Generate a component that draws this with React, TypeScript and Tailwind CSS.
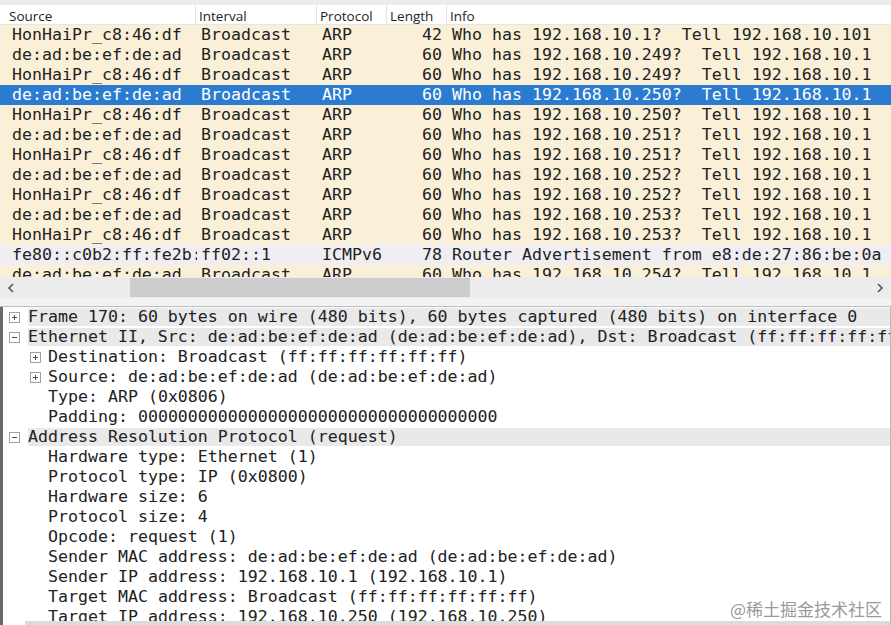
import React from "react";

type Row = { src: string; dst: string; proto: string; len: string; info: string; kind: "arp" | "icmp" | "sel" };

const rows: Row[] = [
  { src: "HonHaiPr_c8:46:df", dst: "Broadcast", proto: "ARP", len: "42", info: "Who has 192.168.10.1?  Tell 192.168.10.101", kind: "arp" },
  { src: "de:ad:be:ef:de:ad", dst: "Broadcast", proto: "ARP", len: "60", info: "Who has 192.168.10.249?  Tell 192.168.10.1", kind: "arp" },
  { src: "HonHaiPr_c8:46:df", dst: "Broadcast", proto: "ARP", len: "60", info: "Who has 192.168.10.249?  Tell 192.168.10.1", kind: "arp" },
  { src: "de:ad:be:ef:de:ad", dst: "Broadcast", proto: "ARP", len: "60", info: "Who has 192.168.10.250?  Tell 192.168.10.1", kind: "sel" },
  { src: "HonHaiPr_c8:46:df", dst: "Broadcast", proto: "ARP", len: "60", info: "Who has 192.168.10.250?  Tell 192.168.10.1", kind: "arp" },
  { src: "de:ad:be:ef:de:ad", dst: "Broadcast", proto: "ARP", len: "60", info: "Who has 192.168.10.251?  Tell 192.168.10.1", kind: "arp" },
  { src: "HonHaiPr_c8:46:df", dst: "Broadcast", proto: "ARP", len: "60", info: "Who has 192.168.10.251?  Tell 192.168.10.1", kind: "arp" },
  { src: "de:ad:be:ef:de:ad", dst: "Broadcast", proto: "ARP", len: "60", info: "Who has 192.168.10.252?  Tell 192.168.10.1", kind: "arp" },
  { src: "HonHaiPr_c8:46:df", dst: "Broadcast", proto: "ARP", len: "60", info: "Who has 192.168.10.252?  Tell 192.168.10.1", kind: "arp" },
  { src: "de:ad:be:ef:de:ad", dst: "Broadcast", proto: "ARP", len: "60", info: "Who has 192.168.10.253?  Tell 192.168.10.1", kind: "arp" },
  { src: "HonHaiPr_c8:46:df", dst: "Broadcast", proto: "ARP", len: "60", info: "Who has 192.168.10.253?  Tell 192.168.10.1", kind: "arp" },
  { src: "fe80::c0b2:ff:fe2b:", dst: "ff02::1", proto: "ICMPv6", len: "78", info: "Router Advertisement from e8:de:27:86:be:0a", kind: "icmp" },
  { src: "de:ad:be:ef:de:ad", dst: "Broadcast", proto: "ARP", len: "60", info: "Who has 192.168.10.254?  Tell 192.168.10.1", kind: "arp" },
];

type Node = { level: 0 | 1; icon?: "plus" | "minus"; text: string };

const tree: Node[] = [
  { level: 0, icon: "plus", text: "Frame 170: 60 bytes on wire (480 bits), 60 bytes captured (480 bits) on interface 0" },
  { level: 0, icon: "minus", text: "Ethernet II, Src: de:ad:be:ef:de:ad (de:ad:be:ef:de:ad), Dst: Broadcast (ff:ff:ff:ff:ff:ff)" },
  { level: 1, icon: "plus", text: "Destination: Broadcast (ff:ff:ff:ff:ff:ff)" },
  { level: 1, icon: "plus", text: "Source: de:ad:be:ef:de:ad (de:ad:be:ef:de:ad)" },
  { level: 1, text: "Type: ARP (0x0806)" },
  { level: 1, text: "Padding: 000000000000000000000000000000000000" },
  { level: 0, icon: "minus", text: "Address Resolution Protocol (request)" },
  { level: 1, text: "Hardware type: Ethernet (1)" },
  { level: 1, text: "Protocol type: IP (0x0800)" },
  { level: 1, text: "Hardware size: 6" },
  { level: 1, text: "Protocol size: 4" },
  { level: 1, text: "Opcode: request (1)" },
  { level: 1, text: "Sender MAC address: de:ad:be:ef:de:ad (de:ad:be:ef:de:ad)" },
  { level: 1, text: "Sender IP address: 192.168.10.1 (192.168.10.1)" },
  { level: 1, text: "Target MAC address: Broadcast (ff:ff:ff:ff:ff:ff)" },
  { level: 1, text: "Target IP address: 192.168.10.250 (192.168.10.250)" },
];

const mono = "font-['DejaVu_Sans_Mono','Liberation_Mono',monospace] text-[16.6px] leading-[20px] whitespace-pre";

function Expander({ type }: { type: "plus" | "minus" }) {
  return (
    <svg width="11" height="11" viewBox="0 0 11 11" className="shrink-0">
      <rect x="0.5" y="0.5" width="10" height="10" fill="#fff" stroke="#a0a0a0" />
      <line x1="3" y1="5.5" x2="8" y2="5.5" stroke="#505050" />
      {type === "plus" && <line x1="5.5" y1="3" x2="5.5" y2="8" stroke="#505050" />}
    </svg>
  );
}

export default function App() {
  return (
    <div className="relative w-[891px] h-[625px] overflow-hidden bg-white flex flex-col">
      {/* top strip */}
      <div className="h-[5px] bg-[#ececec] shrink-0" />
      {/* header */}
      <div className="h-[20px] shrink-0 flex items-center bg-white text-[13.5px] text-[#1e1e1e] font-['Open_Sans','Noto_Sans',sans-serif] border-b border-[#e6e6e6]">
        <div className="w-[196px] pl-[9px] pt-[3px] h-full flex items-center border-r border-[#e2e2e2]">Source</div>
        <div className="w-[121px] pl-[3px] pt-[3px] h-full flex items-center border-r border-[#e2e2e2]">Interval</div>
        <div className="w-[70px] pl-[3px] pt-[3px] h-full flex items-center border-r border-[#e2e2e2]">Protocol</div>
        <div className="w-[60px] pl-[3px] pt-[3px] h-full flex items-center border-r border-[#e2e2e2]">Length</div>
        <div className="pl-[3px] pt-[3px] h-full flex items-center">Info</div>
      </div>
      {/* packet list */}
      <div className="h-[252px] shrink-0 overflow-hidden">
        {rows.map((r, i) => (
          <div
            key={i}
            className={
              "flex h-[20px] items-center " +
              mono +
              " " +
              (r.kind === "sel"
                ? "bg-[#2b7bd0] text-white"
                : r.kind === "icmp"
                ? "bg-[#f0eef2] text-[#222]"
                : "bg-[#faf0d7] text-[#222]")
            }
          >
            <div className="w-[197px] pl-[12px] overflow-hidden shrink-0">{r.src}</div>
            <div className="w-[121px] pl-[4px] shrink-0">{r.dst}</div>
            <div className="w-[70px] pl-[4px] shrink-0">{r.proto}</div>
            <div className="w-[54px] text-right shrink-0">{r.len}</div>
            <div className="pl-[10px] shrink-0">{r.info}</div>
          </div>
        ))}
      </div>
      {/* horizontal scrollbar */}
      <div className="h-[21px] shrink-0 flex items-center bg-[#ececec] text-[#555]">
        <div className="w-[22px] flex justify-center">
          <svg width="8" height="10" viewBox="0 0 8 10">
            <path d="M6 1 L2 5 L6 9" stroke="#555" strokeWidth="1.6" fill="none" />
          </svg>
        </div>
        <div className="w-[108px]" />
        <div className="w-[340px] h-[19px] bg-[#cdcdcd]" />
        <div className="flex-1" />
        <div className="w-[22px] flex justify-center">
          <svg width="8" height="10" viewBox="0 0 8 10">
            <path d="M2 1 L6 5 L2 9" stroke="#555" strokeWidth="1.6" fill="none" />
          </svg>
        </div>
      </div>
      {/* splitter */}
      <div className="h-[9px] shrink-0 bg-[#f3f3f3] border-b border-[#bdbdbd]" />
      {/* details pane */}
      <div className="flex-1 min-h-0 flex flex-col border-l-[3px] border-[#6a6a6a] border-r border-r-[#b8b8b8]">
        <div className="flex-1 min-h-0 overflow-hidden">
          {tree.map((n, i) => (
            <div key={i} className={"flex h-[20px] items-center text-[#222] " + mono}>
              {n.level === 0 ? (
                <>
                  <div className="w-[25px] pl-[6px] flex items-center shrink-0">
                    {n.icon && <Expander type={n.icon} />}
                  </div>
                  <div className="flex-1 h-[18px] flex items-center bg-[#e9e9e9] overflow-hidden">{n.text}</div>
                </>
              ) : (
                <>
                  <div className="w-[25px] shrink-0" />
                  <div className="w-[20px] pl-[2px] flex items-center shrink-0">
                    {n.icon && <Expander type={n.icon} />}
                  </div>
                  <div className="overflow-hidden">{n.text}</div>
                </>
              )}
            </div>
          ))}
        </div>
        <div className="h-[4px] shrink-0 flex">
          <div className="w-[22px] bg-white" />
          <div className="flex-1 bg-[#dcdcdc]" />
        </div>
      </div>
      {/* watermark */}
      <div className="absolute right-[9px] bottom-[6px] text-[17px] leading-[20px] text-[#9a9a9a] font-['Noto_Sans_CJK_SC',sans-serif]">
        @稀土掘金技术社区
      </div>
    </div>
  );
}
